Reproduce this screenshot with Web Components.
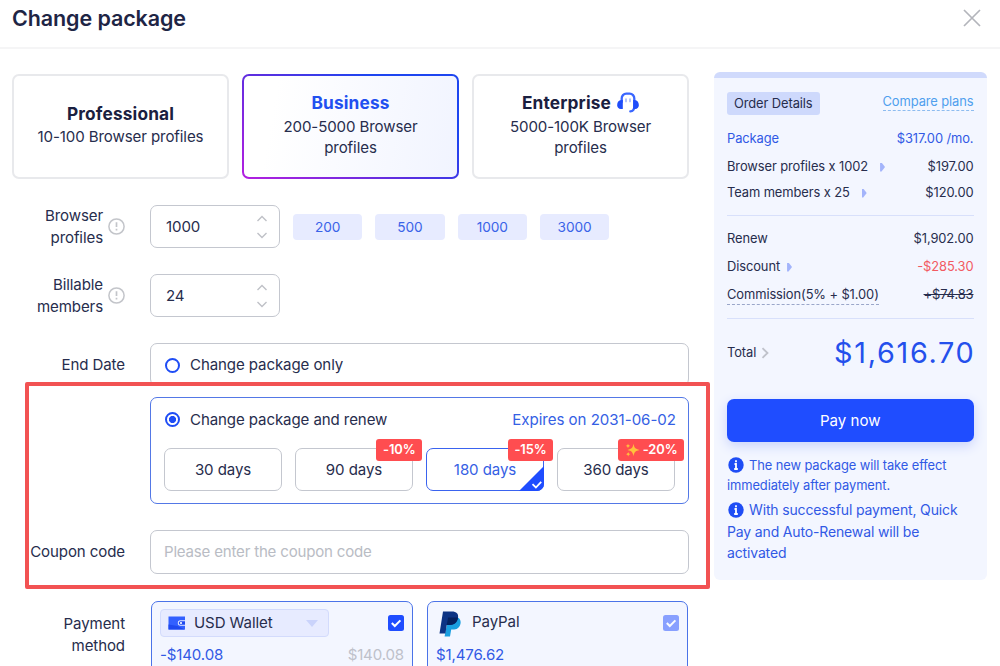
<!DOCTYPE html>
<html lang="en">
<head>
<meta charset="utf-8">
<title>Change package</title>
<style>
  body {
    margin: 0;
    width: 1000px;
    height: 666px;
    overflow: hidden;
    background: #fff;
    color: #272d4d;
    font: 15.07px/21.5px Inter, "Liberation Sans", sans-serif;
    letter-spacing: -0.1px;
  }
</style>
</head>
<body>
<package-dialog></package-dialog>

<script>
class PackageDialog extends HTMLElement {
  constructor() {
    super();
    this.attachShadow({ mode: 'open' });
  }

  connectedCallback() {
    this.shadowRoot.innerHTML = `
      <style>
        :host { display: block; position: relative; height: 666px; overflow: hidden; }
        header {
          display: flex; justify-content: space-between; align-items: center;
          height: 47px; padding: 0 19.5px 12px 12px; box-sizing: border-box;
          box-shadow: 0 2px 0 #f5f5f6;
        }
        h1 { margin: 0; font-size: 21.5px; font-weight: 600; line-height: 28px; color: #1e2545; letter-spacing: -0.1px; }
        header svg { display: block; }
        main { display: grid; grid-template-columns: 677px 273px; column-gap: 25px; padding: 25px 0 0 12px; }
        .left { padding-top: 2px; }
        .plans { display: grid; grid-template-columns: repeat(3, 217px); gap: 13px; margin-bottom: 26px; }
        form-row { margin-bottom: 26px; }
        form-row.coupon { margin-bottom: 27px; }
        .stack { display: grid; row-gap: 11px; }
        .presets { display: flex; gap: 13px; margin-left: 13px; }
        .pay { display: grid; grid-template-columns: 262px 261px; gap: 14px; margin-left: 1px; }
        .frame {
          position: absolute; left: 25px; top: 382px; width: 685px; height: 207px;
          box-sizing: border-box; border: 4px solid #f25253; border-radius: 2px;
        }
      </style>
      <header>
        <h1>Change package</h1>
        <svg width="18" height="18" viewBox="0 0 18 18" fill="none" stroke="#b3b5bb" stroke-width="1.7"><path d="M1 1l16 16M17 1L1 17"/></svg>
      </header>
      <main>
        <div class="left">
          <div class="plans">
            <plan-card>Professional<span slot="range">10-100 Browser profiles</span></plan-card>
            <plan-card active>Business<span slot="range">200-5000 Browser profiles</span></plan-card>
            <plan-card>Enterprise<head-set slot="icon"></head-set><span slot="range">5000-100K Browser profiles</span></plan-card>
          </div>
          <form-row hint>
            <span slot="label">Browser<br>profiles</span>
            <number-input value="1000"></number-input>
            <div class="presets">
              <preset-tag>200</preset-tag><preset-tag>500</preset-tag><preset-tag>1000</preset-tag><preset-tag>3000</preset-tag>
            </div>
          </form-row>
          <form-row hint>
            <span slot="label">Billable<br>members</span>
            <number-input value="24"></number-input>
          </form-row>
          <form-row>
            <span slot="label">End Date</span>
            <div class="stack">
              <renew-option>Change package only</renew-option>
              <renew-option checked>Change package and renew
                <span slot="note">Expires on 2031-06-02</span>
                <day-option slot="days">30 days</day-option>
                <day-option slot="days" badge="-10%">90 days</day-option>
                <day-option slot="days" badge="-15%" selected>180 days</day-option>
                <day-option slot="days" badge="-20%" sparkle>360 days</day-option>
              </renew-option>
            </div>
          </form-row>
          <form-row class="coupon">
            <span slot="label">Coupon code</span>
            <coupon-input></coupon-input>
          </form-row>
          <form-row tall>
            <span slot="label">Payment<br>method</span>
            <div class="pay">
              <pay-card kind="wallet" amount="-$140.08" balance="$140.08">USD Wallet</pay-card>
              <pay-card kind="paypal" amount="$1,476.62">PayPal</pay-card>
            </div>
          </form-row>
        </div>
        <order-panel></order-panel>
      </main>
      <div class="frame"></div>
    `;
  }
}

class PlanCard extends HTMLElement {
  constructor() {
    super();
    this.attachShadow({ mode: 'open' }).innerHTML = `
      <style>
        :host {
          display: flex; flex-direction: column; justify-content: center; align-items: center;
          box-sizing: border-box; height: 105px; padding: 0 20px 3px; border: 2px solid #e8e9ec;
          border-radius: 7px; text-align: center;
        }
        :host([active]) {
          border-color: transparent;
          background: linear-gradient(100deg, #fff 15%, #f1f4ff) padding-box,
            linear-gradient(35deg, #b41fe0, #5a2fe0 45%, #1d45f0 75%) border-box;
        }
        .name {
          display: flex; align-items: center; gap: 6px; height: 22px; margin-bottom: 2px;
          font-weight: 700; font-size: 17.3px; color: #1a2040; letter-spacing: 0.15px; white-space: nowrap;
        }
        :host([active]) .name { color: #2150f0; }
      </style>
      <div class="name"><span><slot></slot></span><slot name="icon"></slot></div>
      <slot name="range"></slot>
    `;
  }
}

class HeadSet extends HTMLElement {
  constructor() {
    super();
    this.attachShadow({ mode: 'open' }).innerHTML = `
      <style>:host { display: block; } svg { display: block; }</style>
      <svg width="22" height="21" viewBox="0 0 22 21" fill="none">
        <path d="M4.700 10V6.500A4.600 4.600 0 0 1 9.300 1.700h3.400A4.600 4.600 0 0 1 17.300 6.500v8c0 2.700-1.100 4.700-4 4.900" stroke="#3a66ff" stroke-width="2.300" stroke-linecap="round"/>
        <path d="M5.800 8v9H4A3.700 3.700 0 0 1 .2 12.700C.2 10.200 1.700 8 4.200 8zM16.200 8v9H18a3.700 3.700 0 0 0 3.800-4.300c0-2.500-1.500-4.700-4-4.700z" fill="#1f4dfa"/>
        <path d="M9 7v2.400M13 7v2.400" stroke="#a8bafc" stroke-width="1.700" stroke-linecap="round"/>
      </svg>
    `;
  }
}

class FormRow extends HTMLElement {
  constructor() {
    super();
    this.attachShadow({ mode: 'open' }).innerHTML = `
      <style>
        :host { display: grid; grid-template-columns: 113px 539px; column-gap: 25px; }
        .label { display: flex; justify-content: flex-end; align-items: center; gap: 5px; height: 43px; text-align: right; white-space: nowrap; }
        :host([tall]) .label { height: 67px; }
        .field { display: flex; align-items: center; }
        svg { display: none; }
        :host([hint]) svg { display: block; }
      </style>
      <div class="label">
        <slot name="label"></slot>
        <svg width="17" height="17" viewBox="0 0 17 17" fill="none" stroke="#c3c5ca"><circle cx="8.500" cy="8.500" r="7.600" stroke-width="1.500"/><path d="M8.500 4.300v4.700M8.500 10.700v1.900" stroke-width="1.700"/></svg>
      </div>
      <div class="field"><slot></slot></div>
    `;
  }
}

class NumberInput extends HTMLElement {
  constructor() {
    super();
    this.attachShadow({ mode: 'open' });
  }

  connectedCallback() {
    this.shadowRoot.innerHTML = `
      <style>
        :host {
          display: flex; justify-content: space-between; align-items: center; box-sizing: border-box;
          width: 130px; height: 43px; padding: 0 11px 0 15px; border: 1px solid #c4c7cf; border-radius: 7px;
        }
        svg { display: block; }
      </style>
      <span>${this.getAttribute('value')}</span>
      <svg width="12" height="26" viewBox="0 0 12 26" fill="none" stroke="#bfc1c7" stroke-width="1.400"><path d="M1.500 7L6 2.500 10.500 7M1.500 19L6 23.500l4.500-4.500"/></svg>
    `;
  }
}

class PresetTag extends HTMLElement {
  constructor() {
    super();
    this.attachShadow({ mode: 'open' }).innerHTML = `
      <style>
        :host {
          display: block; width: 69.300px; height: 26px; border-radius: 4px; background: #e7ebff;
          color: #3a63e8; font-size: 13.700px; line-height: 26px; text-align: center;
        }
      </style>
      <slot></slot>
    `;
  }
}

class RenewOption extends HTMLElement {
  constructor() {
    super();
    this.attachShadow({ mode: 'open' }).innerHTML = `
      <style>
        :host { display: block; box-sizing: border-box; width: 539px; height: 43px; border: 1px solid #c4c7cf; border-radius: 7px; padding: 0 13px; }
        :host([checked]) { height: 107px; border-color: #5378e6; }
        .line { display: flex; align-items: center; height: 42px; gap: 10px; padding-left: 1px; }
        :host([checked]) .line { height: 43px; }
        .dot { box-sizing: border-box; width: 15px; height: 15px; border: 2px solid #1f4df5; border-radius: 50%; }
        :host([checked]) .dot { background: radial-gradient(circle, #1f4df5 3.200px, #fff 3.900px); }
        .text { flex: 1; }
        .note { color: #3560e4; letter-spacing: -0.020px; margin-right: -1px; }
        .days { display: grid; grid-template-columns: repeat(4, 118px); gap: 13px; margin-top: 7px; }
      </style>
      <div class="line"><span class="dot"></span><span class="text"><slot></slot></span><span class="note"><slot name="note"></slot></span></div>
      <div class="days"><slot name="days"></slot></div>
    `;
  }
}

class DayOption extends HTMLElement {
  constructor() {
    super();
    this.attachShadow({ mode: 'open' });
  }

  connectedCallback() {
    const badge = this.getAttribute('badge');
    const sparkle = this.hasAttribute('sparkle')
      ? '<svg width="15" height="14" viewBox="0 0 15 14" fill="#ffc23c"><path d="M8.500.8c.7 4 1.700 5.200 6 6.200-4.300 1-5.300 2.200-6 6.200-.7-4-1.700-5.200-6-6.200 4.300-1 5.300-2.200 6-6.200zM3 .5c.3 1.500.7 2 2.300 2.400C3.700 3.300 3.300 3.800 3 5.300 2.700 3.800 2.300 3.300.7 2.900 2.300 2.500 2.700 2 3 .5zM3.200 8.800c.3 1.500.7 2 2.200 2.400-1.500.4-1.900.9-2.200 2.400-.3-1.500-.7-2-2.200-2.400 1.500-.4 1.900-.9 2.200-2.400z"/></svg>'
      : '';
    this.shadowRoot.innerHTML = `
      <style>
        :host {
          display: block; position: relative; box-sizing: border-box; height: 43px; border: 1px solid #c4c7cf;
          border-radius: 7px; line-height: 41px; text-align: center;
        }
        :host([selected]) { border-color: #3a63ef; color: #3560e4; }
        .badge {
          display: flex; align-items: center; position: absolute; top: -10px; right: -10px; height: 22px; padding: 0 6.500px; gap: 3px;
          border-radius: 3px; background: #ff4d50; color: #fff; font-size: 12.900px; line-height: 22px; font-weight: 600; white-space: nowrap;
        }
        .tick { display: none; position: absolute; right: -1px; bottom: -1px; }
        :host([selected]) .tick { display: block; }
      </style>
      <slot></slot>
      <svg class="tick" width="25" height="25" viewBox="0 0 25 25"><path d="M25 0v18a7 7 0 0 1-7 7H0z" fill="#1f4dff"/><path d="M13.500 18.200l3.400 3.300 5.300-5.700" fill="none" stroke="#fff" stroke-width="1.800"/></svg>
      ${badge ? `<span class="badge">${sparkle}<span>${badge}</span></span>` : ''}
    `;
  }
}

class CouponInput extends HTMLElement {
  constructor() {
    super();
    this.attachShadow({ mode: 'open' }).innerHTML = `
      <style>
        :host {
          display: block; box-sizing: border-box; width: 539px; height: 44px; padding: 0 13px;
          border: 1px solid #c4c7cf; border-radius: 7px; line-height: 42px; color: #b9bcc4; letter-spacing: -0.200px;
        }
      </style>
      <span>Please enter the coupon code</span>
    `;
  }
}

class PayCard extends HTMLElement {
  constructor() {
    super();
    this.attachShadow({ mode: 'open' });
  }

  connectedCallback() {
    const wallet = this.getAttribute('kind') === 'wallet';
    const icon = wallet
      ? '<svg width="18" height="14" viewBox="0 0 18 14"><path d="M.5.500h16.500v3.800h-4.500a2.700 2.700 0 0 0 0 5.400H17v3.800H.5z" fill="#3360ff"/><path d="M.5 8.500l9 1.500 7.500 3.500H.5z" fill="#1f49f0"/><path d="M12.500 5.200H17v3.600h-4.500a1.800 1.800 0 0 1 0-3.600z" fill="#1f49f0"/><circle cx="13" cy="7" r="1.100" fill="#fff"/></svg>'
      : '<svg width="22" height="26" viewBox="0 0 22 26"><path d="M18.800 6.500c2.500 1.300 3.300 3.700 2.600 6.500-.9 4-3.700 5.600-7.700 5.600h-1.500L11 25.500H5.600l1-6 2.500-9z" fill="#1a9fe0"/><path d="M4 .5h8.800c4.700 0 7 2.300 6.200 6.500-.9 4.800-4 7-8.500 7H7.800L6.400 22.500H.5z" fill="#0c3384"/><path d="M9.100 6.500h8.200c.7 0 1.200.1 1.600.3-.8 5-3.900 7.200-8.400 7.200H7.800z" fill="#04215f"/></svg>';
    this.shadowRoot.innerHTML = `
      <style>
        :host { display: block; box-sizing: border-box; height: 90px; padding: 7px 8px 0; border: 1px solid #4b73e8; border-radius: 7px; background: #f3f6ff; }
        .top, .bottom { display: flex; align-items: center; justify-content: space-between; }
        .top { height: 28px; }
        .pick { display: flex; align-items: center; gap: 11px; }
        .wallet { box-sizing: border-box; width: 169px; height: 28px; padding: 0 9px 0 7px; border: 1px solid #d3dbfc; border-radius: 4px; background: #e7ebff; gap: 8px; }
        .wallet .label { flex: 1; }
        .paypal { margin-left: 3px; }
        .paypal svg { margin-top: 2px; }
        .paypal .label { margin-top: -2px; }
        .bottom { height: 36px; color: #3159e5; letter-spacing: -0.150px; }
        .bottom span + span { color: #bec1ca; }
        .faded { opacity: .5; }
        svg { display: block; }
      </style>
      <div class="top">
        <div class="pick ${wallet ? 'wallet' : 'paypal'}">${icon}<span class="label"><slot></slot></span>
          ${wallet ? '<svg width="14" height="7" viewBox="0 0 14 7"><path d="M1 0h12L7 7z" fill="#cad3fb"/></svg>' : ''}
        </div>
        <svg class="${wallet ? '' : 'faded'}" width="16" height="16" viewBox="0 0 16 16"><rect width="16" height="16" rx="2.500" fill="#1f4dff"/><path d="M3.800 8l3 3 5.600-5.600" fill="none" stroke="#fff" stroke-width="2"/></svg>
      </div>
      <div class="bottom"><span>${this.getAttribute('amount')}</span><span>${this.getAttribute('balance') || ''}</span></div>
    `;
  }
}

class OrderRow extends HTMLElement {
  constructor() {
    super();
    this.attachShadow({ mode: 'open' });
  }

  connectedCallback() {
    this.shadowRoot.innerHTML = `
      <style>
        :host { display: flex; justify-content: space-between; align-items: center; height: 28px; font-size: 12.920px; white-space: nowrap; }
        :host([blue]) { color: #3159e5; }
        :host([red]) .price { color: #f25a62; }
        :host([struck]) .price { text-decoration: line-through; }
        :host([struck]) .name { border-bottom: 1px dashed #9aa6c9; line-height: 19px; }
        .name { display: flex; align-items: center; }
        .arrow { display: none; margin-left: 7px; width: 5px; height: 9px; background: #a3b4fb; clip-path: polygon(0 0, 30% 0, 100% 50%, 30% 100%, 0 100%); }
        :host([arrow]) .arrow { display: block; }
        :host([arrow="far"]) .arrow { margin-left: 12px; }
      </style>
      <span class="name"><slot></slot><i class="arrow"></i></span><span class="price">${this.getAttribute('price')}</span>
    `;
  }
}

class InfoNote extends HTMLElement {
  constructor() {
    super();
    this.attachShadow({ mode: 'open' }).innerHTML = `
      <style>
        :host { display: block; color: #3159e5; white-space: nowrap; }
        svg { vertical-align: -3px; margin: 0 5px 0 1px; }
      </style>
      <svg width="16" height="16" viewBox="0 0 16 16"><circle cx="8" cy="8" r="7.700" fill="#1f4df5"/><path d="M8 3.300v2M6.500 7H8v5M6.200 12h3.600" fill="none" stroke="#fff" stroke-width="1.800"/></svg><slot></slot>
    `;
  }
}

class OrderPanel extends HTMLElement {
  constructor() {
    super();
    this.attachShadow({ mode: 'open' });
  }

  connectedCallback() {
    this.shadowRoot.innerHTML = `
      <style>
        :host { display: block; box-sizing: border-box; height: 508px; padding: 14px 13.500px 0 13px; border-top: 6px solid #d0dafc; border-radius: 6px; background: #f3f6ff; }
        .head { display: flex; justify-content: space-between; height: 33px; font-size: 12.920px; }
        .tag { height: 23px; padding: 0 7px; border-radius: 3px; background: #ced9fc; line-height: 23px; }
        .compare { height: 18px; line-height: 18px; color: #4f9fee; border-bottom: 1px dashed #8dbcf0; }
        .first { margin-bottom: 1px; }
        .short { height: 26px; }
        hr { height: 1px; margin: 0; border: 0; background: #d8e0fb; }
        .mid { margin: 9px 0 9px; }
        .end { margin-top: 9px; }
        .total { display: flex; align-items: center; height: 67px; font-size: 12.920px; }
        .total svg { margin-left: 5px; }
        .sum { flex: 1; text-align: right; font-size: 28.800px; letter-spacing: 1.700px; color: #2450ec; margin-right: -2px; }
        button {
          display: block; width: 100%; height: 43px; margin: 13px 0 14px; padding: 0; border: 0; border-radius: 7px;
          background: #1f4dff; color: #fff; font: 15.070px Inter, sans-serif; box-shadow: 0 4px 12px #c9d3fb;
        }
        .a { font-size: 12.920px; line-height: 19.500px; margin-bottom: 4px; }
        .b { font-size: 14px; line-height: 21.500px; letter-spacing: -0.150px; }
      </style>
      <div class="head"><span class="tag">Order Details</span><span class="compare">Compare plans</span></div>
      <order-row class="first" blue price="$317.00 /mo.">Package</order-row>
      <order-row class="short" arrow="far" price="$197.00">Browser profiles x 1002</order-row>
      <order-row class="short" arrow="far" price="$120.00">Team members x 25</order-row>
      <hr class="mid">
      <order-row price="$1,902.00">Renew</order-row>
      <order-row arrow red price="-$285.30">Discount</order-row>
      <order-row struck price="+$74.83">Commission(5% + $1.00)</order-row>
      <hr class="end">
      <div class="total">Total<svg width="8" height="12" viewBox="0 0 8 12" fill="none" stroke="#bfc2cb" stroke-width="1.800"><path d="M1.500 1.200L6.500 6l-5 4.800"/></svg><span class="sum">$1,616.70</span></div>
      <button>Pay now</button>
      <info-note class="a">The new package will take effect<br>immediately after payment.</info-note>
      <info-note class="b">With successful payment, Quick<br>Pay and Auto-Renewal will be<br>activated</info-note>
    `;
  }
}

customElements.define('plan-card', PlanCard);
customElements.define('head-set', HeadSet);
customElements.define('form-row', FormRow);
customElements.define('number-input', NumberInput);
customElements.define('preset-tag', PresetTag);
customElements.define('renew-option', RenewOption);
customElements.define('day-option', DayOption);
customElements.define('coupon-input', CouponInput);
customElements.define('pay-card', PayCard);
customElements.define('order-row', OrderRow);
customElements.define('info-note', InfoNote);
customElements.define('order-panel', OrderPanel);
customElements.define('package-dialog', PackageDialog);
</script>
</body>
</html>
